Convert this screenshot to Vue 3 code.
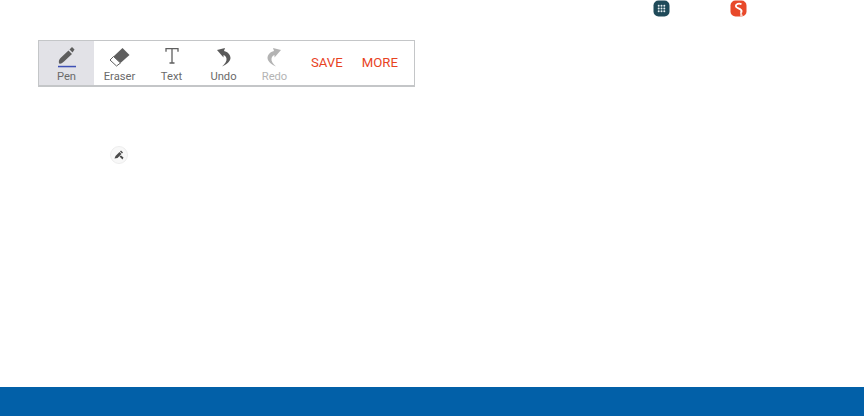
<script setup>
const tools = [
  { label: 'Pen', w: 55, active: true, kind: 'pen' },
  { label: 'Eraser', w: 51, kind: 'eraser' },
  { label: 'Text', w: 53, kind: 'text' },
  { label: 'Undo', w: 51, kind: 'undo' },
  { label: 'Redo', w: 51, kind: 'redo', off: true },
]
const dots = []
for (let y = 0; y < 3; y++) for (let x = 0; x < 3; x++) dots.push({ cx: 5.7 + x * 2.8, cy: 5.700 + y * 2.8 })
const arrow = 'M6 5L14 3l-1 3c4 1 6.500 4 6.500 7 0 3.500-4.500 7-8.500 8.500 3-2.500 5-5.500 4.500-8-.4-2-1.500-3-3-3.500v2.500z'
</script>

<template>
  <div class="page">
    <div class="top">
      <svg class="app" width="17" height="17" viewBox="0 0 17 17">
        <rect x="0.5" y="0.5" width="16" height="16" rx="5" fill="#1f4a59" />
        <circle v-for="(d, i) in dots" :key="i" :cx="d.cx" :cy="d.cy" r="1" fill="#e4edf0" />
      </svg>
      <svg class="app" width="17" height="17" viewBox="0 0 17 17">
        <rect x="0.5" y="0.5" width="16" height="16" rx="5" fill="#e8492a" />
        <path d="M11.500 4.200C9 3 5.800 3.800 5.800 6c0 2.600 5.800 2.200 5.800 5.200 0 1-.5 1.700-1.200 2.200" fill="none" stroke="#fff" stroke-width="1.800" />
        <path d="M10.500 10l2.500 6.500h-2.800z" fill="#f9d5ca" />
      </svg>
    </div>

    <div class="toolbar">
      <div v-for="t in tools" :key="t.label" class="tool" :class="{ active: t.active, off: t.off }" :style="{ width: t.w + 'px' }">
        <svg class="icon" width="26" height="24" viewBox="0 0 26 24">
          <template v-if="t.kind === 'pen'">
            <path d="M5 18.500c-.5-2.500 0-4 1.500-5.500L14.500 5.500 18 9l-8 7.500c-1.500 1.500-3 2.500-5 2z" fill="#5e5e5e" />
            <path d="M15.500 4.500L18 2l2.500 2.500-2 3z" fill="#5e5e5e" />
            <rect x="4" y="20.800" width="18" height="1.500" fill="#3f51b5" />
          </template>
          <template v-else-if="t.kind === 'eraser'">
            <path d="M6.500 11.500L15.500 3l7 7-9 8z" fill="#5f5f5f" />
            <path d="M3 15l3.500-3.500 7 6.500-4 3z" fill="#fff" stroke="#5f5f5f" stroke-width="1" />
          </template>
          <template v-else-if="t.kind === 'text'">
            <path d="M7 6.800V3.700h12v3.100M13 3.700V18M10.500 18h5" fill="none" stroke="#5f5f5f" stroke-width="1.300" />
          </template>
          <template v-else-if="t.kind === 'undo'">
            <path :d="arrow" fill="#5a5a5a" />
          </template>
          <template v-else>
            <path :d="arrow" transform="matrix(-1 0 0 1 25 0)" fill="#b3b3b3" />
          </template>
        </svg>
        <span class="label">{{ t.label }}</span>
      </div>
      <span class="action save">SAVE</span>
      <span class="action more">MORE</span>
    </div>

    <svg class="round" width="18" height="18" viewBox="0 0 18 18">
      <circle cx="9" cy="9" r="8.500" fill="#f8f8f8" stroke="#ededed" />
      <path d="M4.500 12.500l1-2.500 4-4 2 2-4 4z" fill="#4a4a4a" />
      <path d="M10 5.500l1-1 2 2-1 1z" fill="#4a4a4a" />
      <path d="M9.500 10.500l1.500-1 2.500 2-1 2z" fill="#4a4a4a" />
    </svg>

    <div class="bar"></div>
  </div>
</template>

<style scoped>
.page {
  width: 864px;
  height: 416px;
  display: flex;
  flex-direction: column;
  background: #fff;
  font-family: Roboto, "Liberation Sans", sans-serif;
  overflow: hidden;
}
.top {
  display: flex;
  gap: 60px;
  height: 17px;
  padding: 0 0 0 653px;
}
.app { display: block; }
.toolbar {
  box-sizing: border-box;
  display: flex;
  align-items: stretch;
  width: 377px;
  height: 47px;
  margin: 23px 0 0 38px;
  border: 1px solid #c4c6c8;
  border-bottom-width: 2px;
}
.tool {
  flex: none;
  display: flex;
  flex-direction: column;
  align-items: center;
  padding-top: 4px;
  box-sizing: border-box;
  color: #6a6a6a;
}
.tool.active { background: #e2e2e7; }
.tool.off { color: #b4b4b4; }
.icon { display: block; height: 24px; }
.label {
  margin-top: 1px;
  font-size: 11.2px;
  line-height: 13px;
}
.action {
  flex: none;
  align-self: center;
  color: #e8431f;
  font-size: 13.2px;
  line-height: 14px;
}
.save { margin-left: 11px; }
.more { margin-left: 19px; }
.round {
  display: block;
  margin: 59px 0 0 110px;
}
.bar {
  margin-top: auto;
  height: 29px;
  background: #0260a8;
}
</style>
